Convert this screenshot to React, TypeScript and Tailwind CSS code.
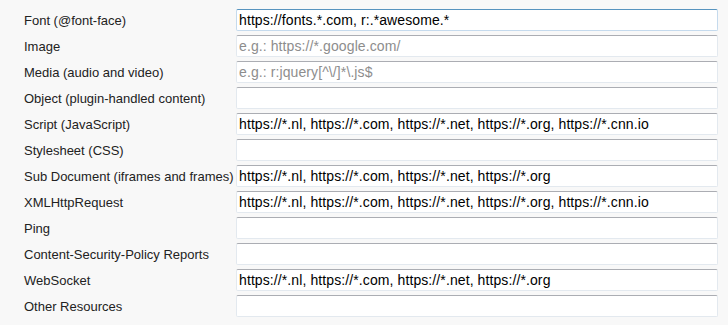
import { useState } from "react";

type Row = { label: string; value?: string; placeholder?: string };

const rows: Row[] = [
  { label: "Font (@font-face)", value: "https://fonts.*.com, r:.*awesome.*" },
  { label: "Image", placeholder: "e.g.: https://*.google.com/" },
  { label: "Media (audio and video)", placeholder: "e.g.: r:jquery[^\\/]*\\.js$" },
  { label: "Object (plugin-handled content)" },
  {
    label: "Script (JavaScript)",
    value: "https://*.nl, https://*.com, https://*.net, https://*.org, https://*.cnn.io",
  },
  { label: "Stylesheet (CSS)" },
  {
    label: "Sub Document (iframes and frames)",
    value: "https://*.nl, https://*.com, https://*.net, https://*.org",
  },
  {
    label: "XMLHttpRequest",
    value: "https://*.nl, https://*.com, https://*.net, https://*.org, https://*.cnn.io",
  },
  { label: "Ping" },
  { label: "Content-Security-Policy Reports" },
  {
    label: "WebSocket",
    value: "https://*.nl, https://*.com, https://*.net, https://*.org",
  },
  { label: "Other Resources" },
];

export default function App() {
  const [values, setValues] = useState(rows.map((r) => r.value ?? ""));

  return (
    <div className="w-[728px] h-[325px] bg-[#f8f8f8] pt-[9px] font-['Liberation_Sans',Arial,sans-serif] text-[13px] text-[#222]">
      {rows.map((row, i) => (
        <div key={row.label} className="flex items-center h-[22px] mb-[4px]">
          <label className="w-[236px] shrink-0 pl-[24px] whitespace-nowrap leading-[22px] pt-[1px]">
            {row.label}
          </label>
          <input
            type="text"
            value={values[i]}
            placeholder={row.placeholder}
            onChange={(e) => {
              const next = [...values];
              next[i] = e.target.value;
              setValues(next);
            }}
            className={`w-[482px] h-[22px] bg-white pl-[2px] pr-[2px] text-[14px] tracking-[0.1px] text-black placeholder:text-[#8d8d8d] outline-none border rounded-[2px] font-['Liberation_Sans',Arial,sans-serif] ${
              i === 0
                ? "border-[#c5daed] border-t-[#5794bf]"
                : "border-[#e3e9ef] border-t-[#abadb3]"
            }`}
          />
        </div>
      ))}
    </div>
  );
}
